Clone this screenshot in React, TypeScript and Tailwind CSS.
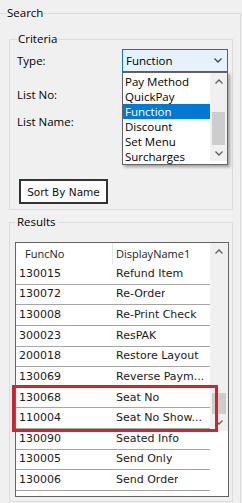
import React from "react";

const rows = [
  ["130015", "Refund Item"],
  ["130072", "Re-Order"],
  ["130008", "Re-Print Check"],
  ["300023", "ResPAK"],
  ["200018", "Restore Layout"],
  ["130069", "Reverse Paym..."],
  ["130068", "Seat No"],
  ["110004", "Seat No Show..."],
  ["130090", "Seated Info"],
  ["130005", "Send Only"],
  ["130006", "Send Order"],
  ["", ""],
];

const typeOptions = ["Pay Method", "QuickPay", "Function", "Discount", "Set Menu", "Surcharges"];

function Chevron({ up = false, className = "" }: { up?: boolean; className?: string }) {
  return (
    <svg width="8" height="5" viewBox="0 0 8 5" className={className}>
      <polyline
        points={up ? "0.5,4.5 4,1 7.5,4.5" : "0.5,0.5 4,4 7.5,0.5"}
        fill="none"
        stroke="currentColor"
        strokeWidth="1.3"
      />
    </svg>
  );
}

function ScrollBar({ thumbTop, thumbHeight, arrow }: { thumbTop: string; thumbHeight: string; arrow: string }) {
  return (
    <div className="flex flex-col bg-[#f0f0f0] text-[#606060]">
      <div className={`${arrow} flex items-center justify-center`}>
        <Chevron up />
      </div>
      <div className="flex-1 px-[2px]">
        <div className={`${thumbTop} ${thumbHeight} bg-[#cdcdcd]`} />
      </div>
      <div className={`${arrow} flex items-center justify-center`}>
        <Chevron />
      </div>
    </div>
  );
}

function TypeCombo() {
  return (
    <div className="relative w-[106px] h-[23px]">
      <div className="flex h-full items-center justify-between border border-[#0078d7] bg-[#e5f1fb] pl-[3px] pr-[5px]">
        <span>Function</span>
        <Chevron className="text-[#444]" />
      </div>
      <div className="absolute left-0 top-full z-10 flex h-[93px] w-[106px] border border-[#646464] bg-white shadow-[2px_2px_3px_rgba(0,0,0,0.35)]">
        <div className="w-[87px] pt-[1px]">
          {typeOptions.map((o) => (
            <div
              key={o}
              className={`h-[15px] pl-[2px] leading-[15px] ${o === "Function" ? "bg-[#0078d7] text-white" : ""}`}
            >
              {o}
            </div>
          ))}
        </div>
        <div className="w-[17px]">
          <div className="h-full">
            <ScrollBar thumbTop="mt-[23px]" thumbHeight="h-[33px]" arrow="h-[16px]" />
          </div>
        </div>
      </div>
    </div>
  );
}

export default function App() {
  return (
    <div className="relative h-[503px] w-[242px] overflow-hidden bg-[#f0f0f0] font-['Open_Sans',sans-serif] text-[11.5px] leading-[14px] text-black">
      <fieldset className="ml-[-1px] mt-[6px] w-[242px] border border-[#dcdcdc] px-[7px] pb-[10px]">
        <legend className="pr-[1px] leading-[14px]">Search</legend>

        <fieldset className="ml-[2px] mt-[12px] border border-[#dcdcdc] pl-[7px] pr-[4px] pb-[5px]">
          <legend className="px-[1px] leading-[14px]">Criteria</legend>

          <div className="mt-[3px] flex h-[23px] items-center">
            <span className="w-[105px]">Type:</span>
            <TypeCombo />
          </div>
          <div className="mt-[11px] flex h-[23px] items-center">
            <span className="w-[105px]">List No:</span>
            <div className="h-[23px] w-[105px] border border-[#7a7a7a] bg-white" />
          </div>
          <div className="mt-[4px] flex h-[23px] items-center">
            <span className="w-[105px]">List Name:</span>
            <div className="h-[23px] w-[105px] border border-[#7a7a7a] bg-white" />
          </div>

          <button className="ml-[2px] mt-[46px] flex h-[25px] w-[89px] items-center justify-center border-2 border-[#333] bg-[#fdfdfd] font-['DejaVu_Sans',sans-serif] text-[10.5px] text-[#111]">
            Sort By Name
          </button>
        </fieldset>

        <fieldset className="ml-[2px] mt-[5px] border border-[#dcdcdc] pl-[5px] pr-[3px] pb-[4px]">
          <legend className="px-[2px] leading-[14px]">Results</legend>

          <div className="mt-[13px] flex h-[255px] w-[214px] overflow-hidden border border-[#646464] bg-white">
            <div className="w-[194px]">
              <div className="flex h-[21px] items-center text-[11px] text-[#222]">
                <div className="flex h-full w-[97px] items-center border-r border-[#e5e5e5] pl-[9px]">FuncNo</div>
                <div className="pl-[3px]">DisplayName1</div>
              </div>
              {rows.map(([no, name], i) => (
                <div
                  key={i}
                  className="flex h-[20.64px] items-center border-b border-[#a6a6a6] font-['DejaVu_Sans',sans-serif] text-[11px] text-[#1a1a1a]"
                >
                  <div className="w-[97px] pl-[3px]">{no}</div>
                  <div className="truncate pl-[3px]">{name}</div>
                </div>
              ))}
            </div>
            <div className="w-[18px]">
              <div className="h-full">
                <ScrollBar thumbTop="mt-[133px]" thumbHeight="h-[21px]" arrow="h-[17px]" />
              </div>
            </div>
          </div>
        </fieldset>
      </fieldset>

      <div className="absolute left-[12px] top-[385px] h-[47px] w-[206px] border-[3px] border-[#d42330]" />
    </div>
  );
}
